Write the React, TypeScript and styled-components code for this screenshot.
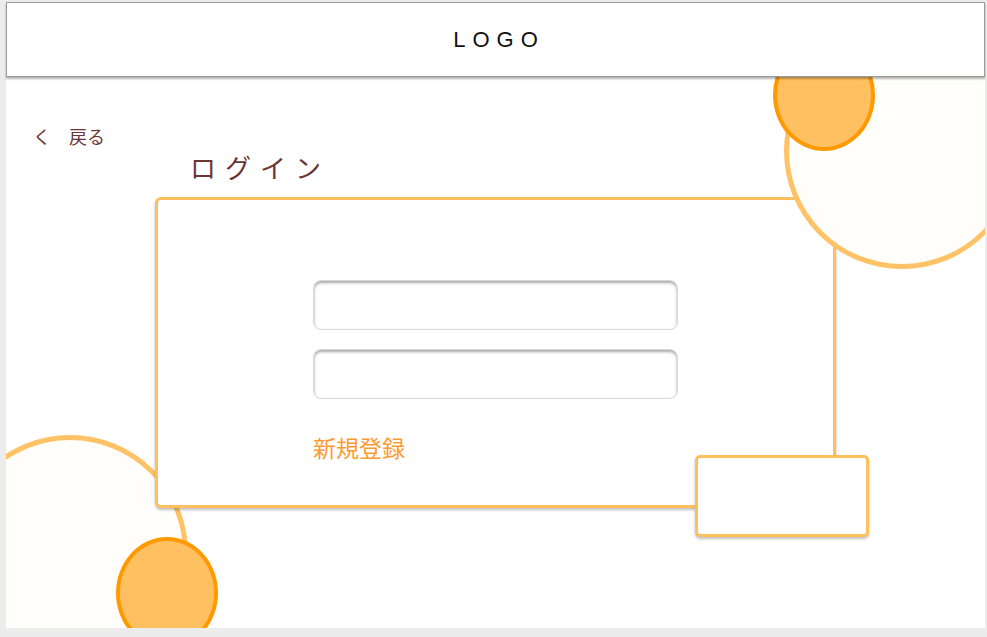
import React from 'react'
import styled, { createGlobalStyle } from 'styled-components'

const GlobalStyle = createGlobalStyle`
	html, body {
		margin: 0;
		padding: 0;
		background: #ececec;
	}
	body {
		font-family: 'Noto Sans CJK JP', 'Noto Sans', sans-serif;
	}
	* {
		box-sizing: border-box;
	}
`

const App: React.FC = () => {
	return (
		<>
			<GlobalStyle />
			<StyledPage>
				<StyledHeader>
					<StyledLogo>LOGO</StyledLogo>
				</StyledHeader>
				<StyledMain>
					<StyledRing size={236} left={-54} top={358} layer={0} />
					<StyledBlob left={110} top={460} layer={1} />
					<StyledRing size={236} left={778} top={-44} layer={3} />
					<StyledBlob left={767} top={-38} layer={4} />

					<StyledContent>
						<StyledBack href="#">く　戻る</StyledBack>
						<StyledTitle>ログイン</StyledTitle>
						<StyledCardWrap>
							<StyledCard>
								<StyledInput type="text" />
								<StyledInput type="password" />
								<StyledRegister href="#">新規登録</StyledRegister>
							</StyledCard>
							<StyledSubmit type="button" />
						</StyledCardWrap>
					</StyledContent>
				</StyledMain>
			</StyledPage>
		</>
	)
}

const orangeLight = '#ffbf5f'
const orange = '#ff9900'
const brown = '#6b3535'

const StyledPage = styled.div`
	display: flex;
	flex-direction: column;
	margin: 2px 0 0 6px;
	width: 979px;
	height: 626px;
	background: #ffffff;
`

const StyledHeader = styled.header`
	position: relative;
	z-index: 10;
	display: flex;
	align-items: center;
	justify-content: center;
	height: 75px;
	border: 1px solid #9a9a9a;
	background: #ffffff;
	box-shadow: 0 2px 2px rgba(0, 0, 0, 0.3);
`

const StyledLogo = styled.h1`
	margin: 0 0 0 7px;
	font-family: 'Liberation Sans', Arial, sans-serif;
	font-size: 22px;
	font-weight: 400;
	letter-spacing: 7px;
	color: #111111;
`

const StyledMain = styled.main`
	position: relative;
	flex: 1;
	overflow: hidden;
	background: #ffffff;
`

const StyledRing = styled.div<{ size: number; left: number; top: number; layer: number }>`
	position: absolute;
	left: ${(p) => p.left}px;
	top: ${(p) => p.top}px;
	width: ${(p) => p.size}px;
	height: ${(p) => p.size}px;
	border: 5px solid #ffc266;
	border-radius: 50%;
	background: #fffefa;
	z-index: ${(p) => p.layer};
`

const StyledBlob = styled.div<{ left: number; top: number; layer: number }>`
	position: absolute;
	left: ${(p) => p.left}px;
	top: ${(p) => p.top}px;
	width: 102px;
	height: 112px;
	border: 4px solid ${orange};
	border-radius: 50%;
	background: #ffc062;
	z-index: ${(p) => p.layer};
`

const StyledContent = styled.div`
	display: flex;
	flex-direction: column;
	align-items: flex-start;
	padding: 49px 0 0 27px;
`

const StyledBack = styled.a`
	font-size: 18px;
	line-height: 20px;
	color: ${brown};
	text-decoration: none;
`

const StyledTitle = styled.h2`
	margin: 3px 0 0 157px;
	font-size: 26px;
	font-weight: 400;
	line-height: 36px;
	letter-spacing: 9px;
	color: ${brown};
`

const StyledCardWrap = styled.div`
	position: relative;
	z-index: 2;
	margin: 12px 0 0 122px;
`

const StyledCard = styled.div`
	display: flex;
	flex-direction: column;
	align-items: flex-start;
	gap: 19px;
	width: 681px;
	height: 311px;
	padding: 80px 0 0 155px;
	border: 3px solid ${orangeLight};
	border-radius: 6px;
	background: #ffffff;
	box-shadow: 0 2px 3px rgba(0, 0, 0, 0.25);
`

const StyledInput = styled.input`
	width: 365px;
	height: 50px;
	border: 1px solid #d8d8d8;
	border-radius: 8px;
	background: #ffffff;
	box-shadow: inset 0 2px 3px rgba(0, 0, 0, 0.35);
	outline: none;
`

const StyledRegister = styled.a`
	margin-top: 14px;
	font-size: 23px;
	line-height: 30px;
	color: #ff9a33;
	text-decoration: none;
`

const StyledSubmit = styled.button`
	position: absolute;
	left: 540px;
	top: 258px;
	width: 174px;
	height: 82px;
	border: 3px solid ${orangeLight};
	border-radius: 5px;
	background: #ffffff;
	box-shadow: 0 2px 3px rgba(0, 0, 0, 0.25);
	cursor: pointer;
`

export default App
